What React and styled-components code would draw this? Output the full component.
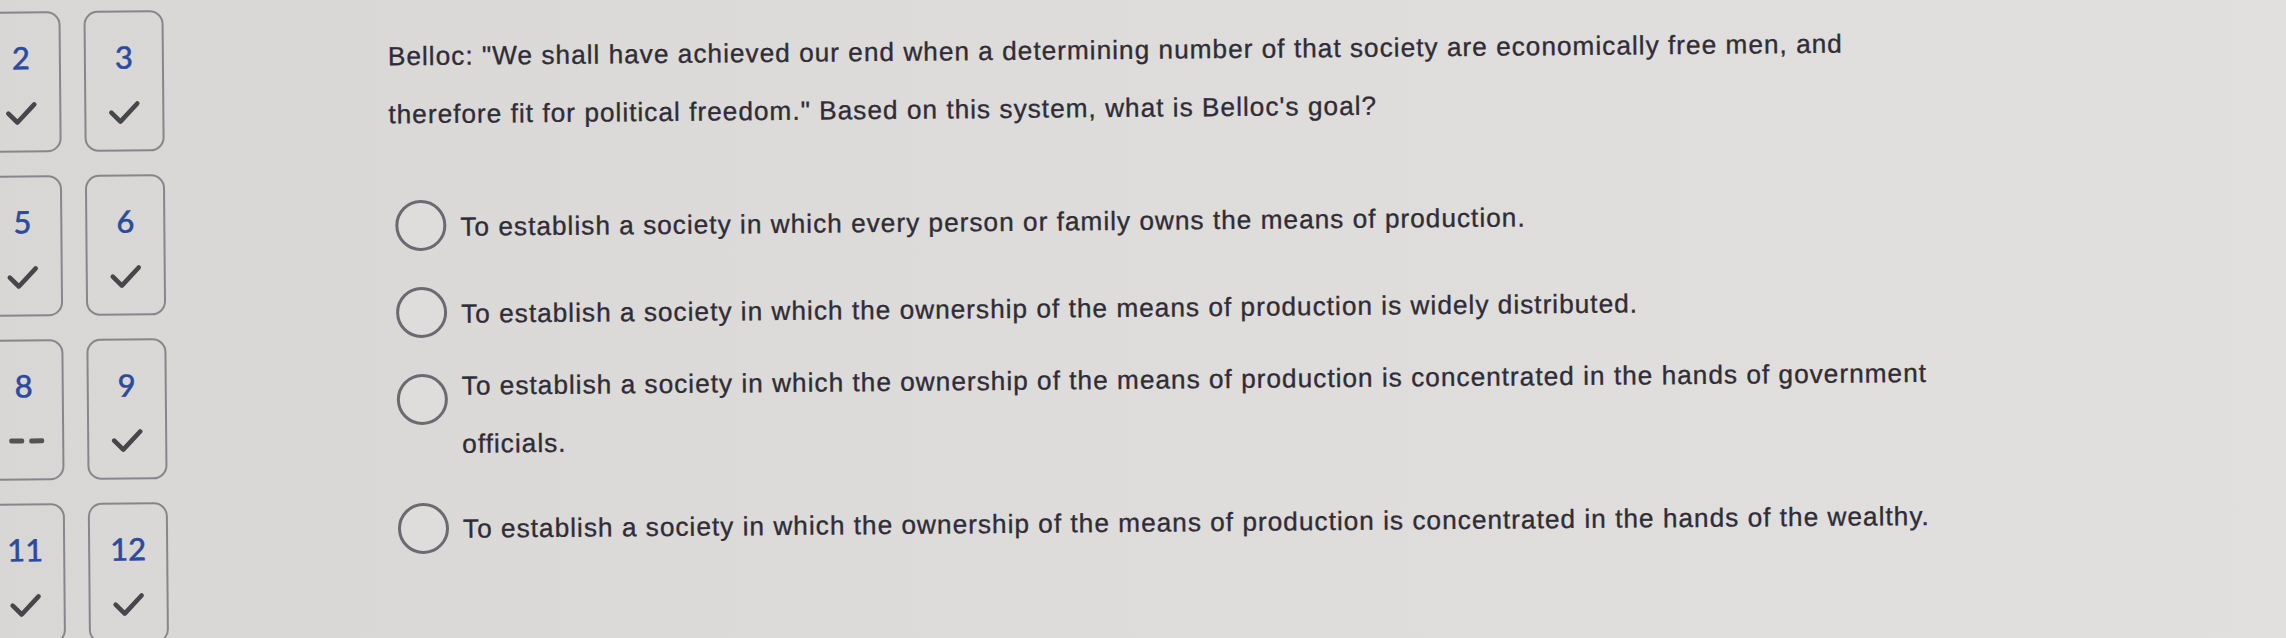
import React from "react";
import styled, { createGlobalStyle } from "styled-components";

const GlobalStyle = createGlobalStyle`
  html, body {
    margin: 0;
    padding: 0;
    overflow: hidden;
    background: linear-gradient(90deg, #d8d7d5 0%, #dddcda 45%, #e1e0de 100%);
  }
  #root {
    width: 2286px;
    height: 638px;
  }
`;

const questions = [
  { num: 2, done: true },
  { num: 3, done: true },
  { num: 5, done: true },
  { num: 6, done: true },
  { num: 8, done: false },
  { num: 9, done: true },
  { num: 11, done: true },
  { num: 12, done: true },
];

const answers = [
  {
    text: "To establish a society in which every person or family owns the means of production.",
  },
  {
    text: "To establish a society in which the ownership of the means of production is widely distributed.",
  },
  {
    text: "To establish a society in which the ownership of the means of production is concentrated in the hands of government officials.",
    wrapped: true,
  },
  {
    text: "To establish a society in which the ownership of the means of production is concentrated in the hands of the wealthy.",
  },
];

function Check() {
  return (
    <CheckIcon viewBox="0 0 32 26" width="32" height="26">
      <polyline
        points="3,14 12,23 29,5"
        fill="none"
        stroke="#47464b"
        strokeWidth="4.6"
        strokeLinecap="round"
        strokeLinejoin="round"
      />
    </CheckIcon>
  );
}

function App() {
  return (
    <>
      <GlobalStyle />
      <Page>
        {/* question navigator */}
        <Sidebar>
          {questions.map((q) => (
            <QuestionCard key={q.num}>
              <QuestionNum>{q.num}</QuestionNum>
              {q.done ? (
                <Check />
              ) : (
                <Dashes>
                  <span />
                  <span />
                </Dashes>
              )}
            </QuestionCard>
          ))}
        </Sidebar>

        {/* question + answers */}
        <Main>
          <Prompt>
            Belloc: "We shall have achieved our end when a determining number
            of that society are economically free men, and therefore fit for
            political freedom." Based on this system, what is Belloc's goal?
          </Prompt>
          <AnswerList>
            {answers.map((a, i) => (
              <AnswerRow key={i}>
                <Radio />
                <AnswerText $wrapped={a.wrapped}>{a.text}</AnswerText>
              </AnswerRow>
            ))}
          </AnswerList>
        </Main>
      </Page>
    </>
  );
}

// Page CSS

const Page = styled.div`
  display: flex;
  align-items: flex-start;
  width: 2286px;
  height: 638px;
  transform: rotate(-0.5deg);
  transform-origin: 420px 300px;
  font-family: "Liberation Sans", Arial, sans-serif;
`;

// Sidebar CSS

const Sidebar = styled.div`
  display: grid;
  grid-template-columns: 80px 80px;
  column-gap: 23px;
  row-gap: 23px;
  margin-left: -17px;
  padding-top: 8px;
  flex-shrink: 0;
`;
const QuestionCard = styled.div`
  box-sizing: border-box;
  height: 141px;
  border: 2.5px solid #87868a;
  border-radius: 14px;
  display: flex;
  flex-direction: column;
  align-items: center;
  padding-top: 29px;
`;
const QuestionNum = styled.div`
  font-family: Lato, "Open Sans", sans-serif;
  font-size: 31px;
  font-weight: 500;
  line-height: 30px;
  color: #2c4a9e;
  -webkit-text-stroke: 0.4px #2c4a9e;
`;
const CheckIcon = styled.svg`
  display: block;
  margin-top: 27px;
`;
const Dashes = styled.div`
  display: flex;
  gap: 5px;
  margin-top: 38px;
  margin-left: 4px;

  span {
    width: 15px;
    height: 5px;
    border-radius: 2px;
    background: #535256;
  }
`;

// Question CSS

const Main = styled.div`
  margin-left: 224px;
  padding-top: 27px;
  width: 1590px;
  flex-shrink: 0;
  color: #302c36;
  font-size: 26.2px;
  letter-spacing: 1.02px;
  -webkit-text-stroke: 0.35px #302c36;
`;
const Prompt = styled.p`
  margin: 0;
  max-width: 1530px;
  line-height: 58px;
`;
const AnswerList = styled.div`
  margin-top: 40px;
  padding-left: 6px;
  display: flex;
  flex-direction: column;
`;
const AnswerRow = styled.div`
  display: flex;
  align-items: flex-start;
  gap: 14px;
  min-height: 87px;
`;
const Radio = styled.span`
  box-sizing: border-box;
  flex-shrink: 0;
  width: 51px;
  height: 51px;
  margin-top: 17px;
  border: 3px solid #6c6970;
  border-radius: 50%;
  background: #dedddb;
`;
const AnswerText = styled.p`
  margin: 0;
  line-height: 58px;
  padding-top: ${(p) => (p.$wrapped ? "0" : "14.5px")};
  padding-bottom: ${(p) => (p.$wrapped ? "12.5px" : "0")};
`;

export default App;
